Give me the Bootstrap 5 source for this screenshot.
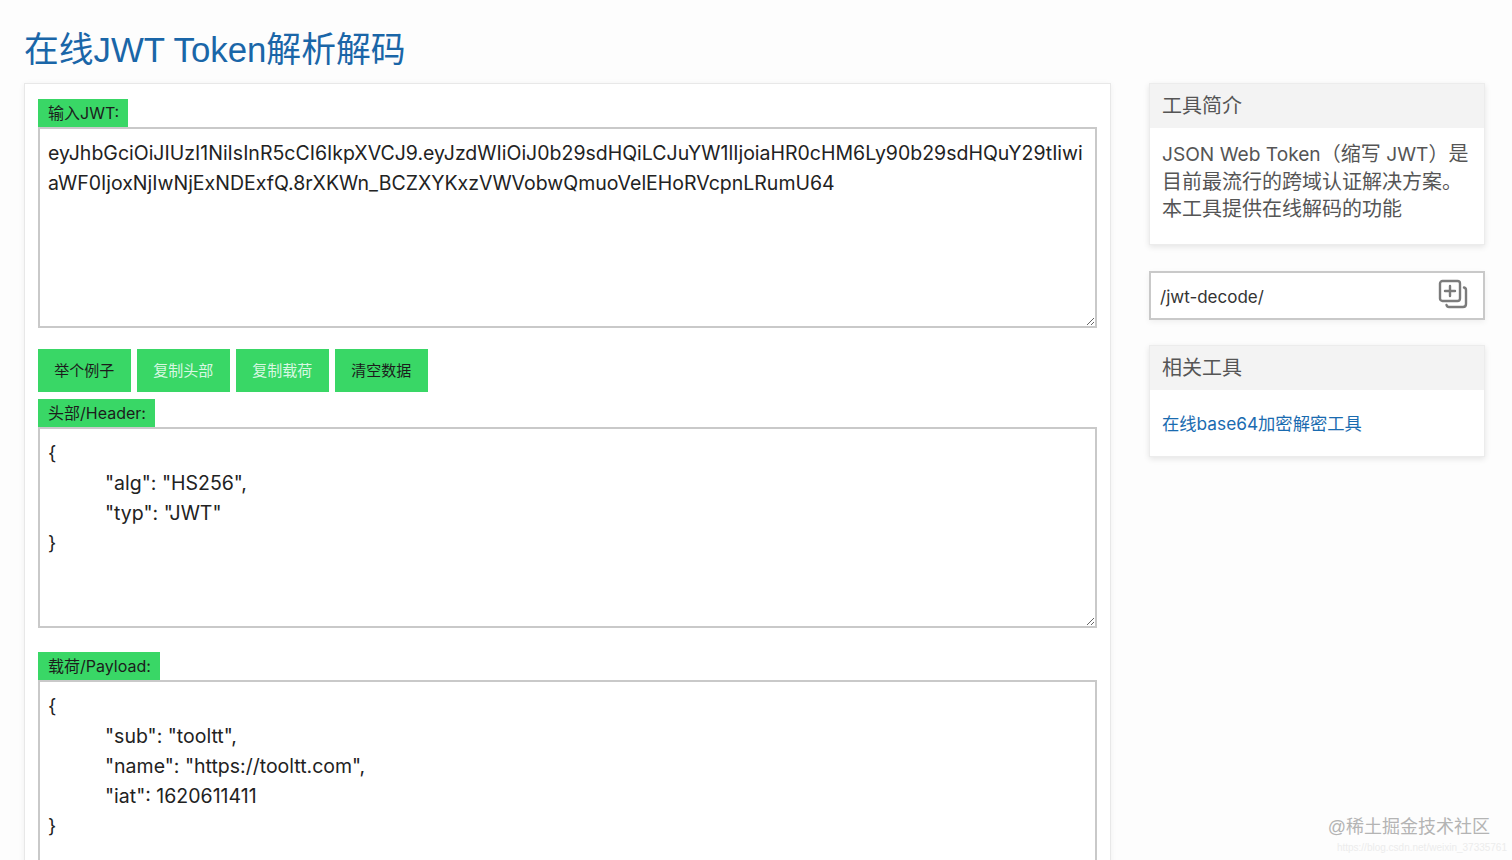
<!DOCTYPE html>
<html lang="zh-CN">
<head>
<meta charset="utf-8">
<title>在线JWT Token解析解码</title>
<link href="https://cdn.jsdelivr.net/npm/bootstrap@5.3.0/dist/css/bootstrap.min.css" rel="stylesheet">
<style>
html,body{height:860px;overflow:hidden;background:#fdfdfd;}
body{font-family:Inter,"Noto Sans CJK SC",sans-serif;color:#222;position:relative;}
.page-wrap{padding:0 27px 0 24px;}
.page-title{font-family:"Liberation Sans","Noto Sans CJK SC",sans-serif;font-size:34.8px;line-height:44px;color:#1a66a8;font-weight:400;margin:0;padding:28px 0 11px;}
.main-pane{width:1087px;flex:none;background:#fff;border:1px solid #e8e8e8;box-shadow:0 1px 6px rgba(0,0,0,.06);padding:15px 13px 0;height:800px;}
.side-pane{width:336px;flex:none;}
.gap-side{gap:38px;}
.tag-label{display:inline-block;vertical-align:top;background:#39d766;color:#1c1c1c;font-size:16px;line-height:29px;height:28px;padding:0 9px 0 10px;}
.jwt-area.form-control{display:block;height:201px;width:1059px;border:2px solid #c9c9c9;border-radius:0;box-shadow:none;font-size:19.5px;line-height:30px;color:#222;padding:9px 8px;tab-size:57px;font-family:Inter,"Noto Sans CJK SC",sans-serif;background:#fff;overflow:hidden;}
.area-spaced{margin-bottom:24px;}
.btn-row{gap:6.5px;margin:21px 0 7px;}
.btn.green-btn{background:#39d766;border:0;border-radius:0;width:92.5px;height:43px;padding:1px 0 0;font-size:15px;color:#1c1c1c;}
.btn.green-btn.light-text{color:#d8f7e2;}
.side-card.card{border:1px solid #ececec;border-radius:0;box-shadow:0 2px 6px rgba(0,0,0,.1);}
.side-card .card-header{background:#f3f3f3;border:0;border-radius:0;height:44px;padding:0 12px;font-size:20px;line-height:44px;color:#555;}
.side-card .card-body{padding:12px;}
.intro-text{font-size:20px;line-height:27.5px;color:#555;margin:0;height:92px;padding-top:1px;}
.latin-run{font-size:19.15px;}
.path-box{height:49px;border:2px solid #c9c9c9;background:#fff;margin:26px 0 25px;padding:0 15px 0 9px;font-size:17px;color:#333;box-shadow:0 2px 6px rgba(0,0,0,.06);}
.path-text{padding-top:4px;}
.path-icon{margin-bottom:4px;}
.tool-link{font-size:17.3px;line-height:28px;color:#1a6bb0;text-decoration:none;display:block;height:42px;padding-top:8px;}
.wm-main{position:absolute;right:22px;top:815px;font-size:18px;line-height:24px;color:#b4b4b4;font-family:"Liberation Sans","Noto Sans CJK SC",sans-serif;}
.wm-sub{position:absolute;right:5px;top:841px;font-size:10px;line-height:14px;color:#ececec;font-family:"Liberation Sans",sans-serif;}
</style>
</head>
<body>
<div class="page-wrap">
  <h1 class="page-title">在线JWT Token解析解码</h1>
  <div class="d-flex align-items-start gap-side">
    <main class="main-pane">
      <div><span class="tag-label">输入JWT:</span></div>
      <textarea class="form-control jwt-area">eyJhbGciOiJIUzI1NiIsInR5cCI6IkpXVCJ9.eyJzdWIiOiJ0b29sdHQiLCJuYW1lIjoiaHR0cHM6Ly90b29sdHQuY29tIiwiaWF0IjoxNjIwNjExNDExfQ.8rXKWn_BCZXYKxzVWVobwQmuoVelEHoRVcpnLRumU64</textarea>
      <div class="d-flex btn-row">
        <button type="button" class="btn green-btn">举个例子</button>
        <button type="button" class="btn green-btn light-text">复制头部</button>
        <button type="button" class="btn green-btn light-text">复制载荷</button>
        <button type="button" class="btn green-btn">清空数据</button>
      </div>
      <div><span class="tag-label">头部/Header:</span></div>
      <textarea class="form-control jwt-area area-spaced">{
	"alg": "HS256",
	"typ": "JWT"
}</textarea>
      <div><span class="tag-label">载荷/Payload:</span></div>
      <textarea class="form-control jwt-area">{
	"sub": "tooltt",
	"name": "https://tooltt.com",
	"iat": 1620611411
}</textarea>
    </main>
    <aside class="side-pane">
      <div class="card side-card">
        <div class="card-header">工具简介</div>
        <div class="card-body"><p class="intro-text"><span class="latin-run">JSON Web Token</span>（缩写 <span class="latin-run">JWT</span>）是<br>目前最流行的跨域认证解决方案。<br>本工具提供在线解码的功能</p></div>
      </div>
      <div class="path-box d-flex align-items-center justify-content-between">
        <span class="path-text">/jwt-decode/</span>
        <svg class="path-icon" width="30" height="30" viewBox="0 0 30 30" fill="none" stroke="#7b7b7b" stroke-width="2.4" stroke-linecap="round" stroke-linejoin="round" aria-hidden="true"><rect x="2" y="2" width="20" height="20" rx="2.5"/><path d="M12 7v10M7 12h10"/><path d="M26 8.5c1.2.3 2 1.2 2 2.5v14c0 1.7-1.3 3-3 3H11c-1.3 0-2.2-.8-2.5-2"/></svg>
      </div>
      <div class="card side-card">
        <div class="card-header">相关工具</div>
        <div class="card-body"><a class="tool-link" href="#">在线base64加密解密工具</a></div>
      </div>
    </aside>
  </div>
</div>
<div class="wm-main">@稀土掘金技术社区</div>
<div class="wm-sub">https://blog.csdn.net/weixin_37335761</div>
<script src="https://cdn.jsdelivr.net/npm/bootstrap@5.3.0/dist/js/bootstrap.bundle.min.js"></script>
</body>
</html>
